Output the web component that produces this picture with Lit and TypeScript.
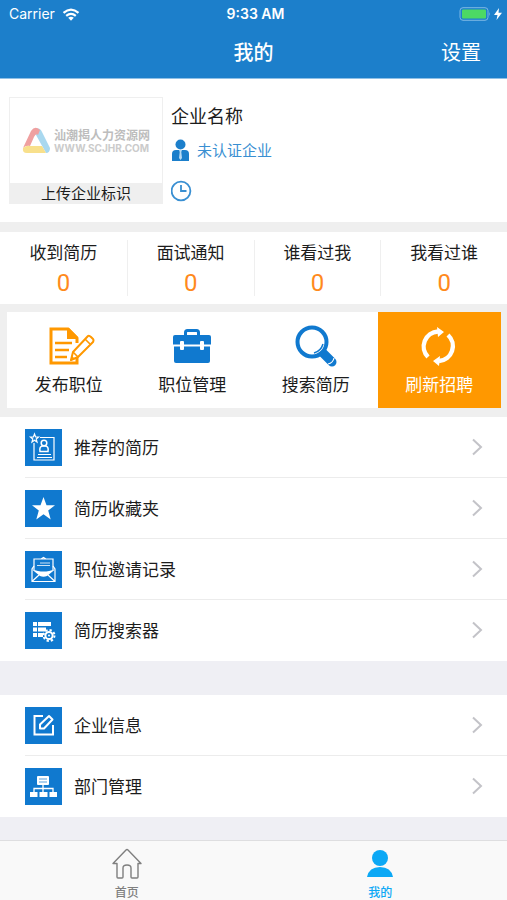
import { LitElement, html, css } from "lit";
import type { TemplateResult } from "lit";
import { customElement, state } from "lit/decorators.js";
import { classMap } from "lit/directives/class-map.js";

const icons: Record<string, TemplateResult> = {
  publish: html`<svg viewBox="-6 0 52 40" width="52" height="40" aria-hidden="true">
    <path d="M28 29V37H2V3H19L28 12V17" fill="none" stroke="#ff9800" stroke-width="3"/>
    <path d="M18 2H20L29 11V13H18Z" fill="#ff9800"/>
    <path d="M6 17H23M6 24H20M6 31H18" stroke="#ff9800" stroke-width="2.4" fill="none"/>
    <path d="M22 34L24 26L39 10Q40 9 42 11L44 13Q45 14 44 16L29 31Z" fill="#fff" stroke="#ff9800" stroke-width="2" stroke-linejoin="round"/>
    <path d="M36 13L41 18M24 26L29 31" stroke="#ff9800" stroke-width="1.6" fill="none"/>
    <path d="M21 35L23 30L26 33Z" fill="#ff9800"/>
  </svg>`,
  briefcase: html`<svg viewBox="0 0 40 40" width="40" height="40" aria-hidden="true">
    <path d="M13.500 10V6.500Q13.500 4.500 15.500 4.500H24.500Q26.500 4.500 26.500 6.500V10" fill="none" stroke="#1079cf" stroke-width="3"/>
    <path d="M3 9H37Q39 9 39 11V18.500H1V11Q1 9 3 9Z" fill="#1079cf"/>
    <path d="M2 20.500H38V35Q38 37 36 37H4Q2 37 2 35Z" fill="#1079cf"/>
    <rect x="8" y="15" width="4" height="9" rx="1" fill="#fff"/>
    <rect x="28" y="15" width="4" height="9" rx="1" fill="#fff"/>
  </svg>`,
  magnifier: html`<svg viewBox="0 0 42 42" width="42" height="42" aria-hidden="true">
    <path d="M28 28L37 37" stroke="#1079cf" stroke-width="9" stroke-linecap="round"/>
    <circle cx="17" cy="17" r="14.5" fill="#fff" stroke="#1079cf" stroke-width="4"/>
    <path d="M19 28Q26 26 28 19" fill="none" stroke="#1079cf" stroke-width="1.5"/>
    <path d="M33 39Q38 38 39 33" fill="none" stroke="#fff" stroke-width="1.2"/>
  </svg>`,
  refresh: html`<svg viewBox="0 0 38 40" width="38" height="40" aria-hidden="true">
    <path d="M8 31A15 15 0 0 1 18 5.500M28 9A15 15 0 0 1 19 35" fill="none" stroke="#fff" stroke-width="4.4"/>
    <path d="M17 1L24 6L18 11Z M20 30L13 35L19 40Z" fill="#fff"/>
  </svg>`,
  recommend: html`<svg viewBox="0 0 37 37" width="37" height="37" aria-hidden="true">
    <g fill="none" stroke="#fff" stroke-width="1.2">
      <path d="M15 8.500H29V31H9V14"/>
      <circle cx="19" cy="14" r="2.8" stroke-width="1.5"/>
      <path d="M15 22.500Q14 17 18 17H20Q24 17 23 22.500Z" stroke-width="1.5"/>
      <path d="M13 25.500H26M12 28.500H27"/>
      <path d="M9.500 5L10.600 8H13.500L11.200 10L12 13L9.500 11.200L7 13L7.800 10L5.500 8H8.400Z"/>
    </g>
  </svg>`,
  star: html`<svg viewBox="0 0 37 37" width="37" height="37" aria-hidden="true">
    <path d="M18.500 7L21.500 15.300H30L23.200 20.500L25.700 29.500L18.500 24.200L11.300 29.500L13.800 20.500L7 15.300H15.500Z" fill="#fff"/>
  </svg>`,
  envelope: html`<svg viewBox="0 0 37 37" width="37" height="37" aria-hidden="true">
    <g fill="none" stroke="#fff" stroke-width="1.2">
      <path d="M9 19V8H28V19M16 8L18.500 6.500L21 8"/>
      <path d="M9 15L7 18V30.500H30V18L28 15M7.500 30L14 24M29.500 30L23 24"/>
      <path d="M15 12H25M12 14.500H25" stroke-width=".8"/>
    </g>
    <path d="M7 18.500L13 20Q18.500 21 24 20L30 18.500L22 25Q18.500 26.500 15 25Z" fill="#fff"/>
  </svg>`,
  filter: html`<svg viewBox="0 0 37 37" width="37" height="37" aria-hidden="true">
    <path d="M8 10H12V14H8ZM13 10H26V14H13ZM8 15.500H12V19.500H8ZM13 15.500H21V19.500H13ZM8 21H12V25H8ZM13 21H18V25H13Z" fill="#fff"/>
    <circle cx="24" cy="23.5" r="5.5" fill="none" stroke="#fff" stroke-width="2" stroke-dasharray="2.3 2"/>
    <circle cx="24" cy="23.5" r="3.6" fill="#1079cf" stroke="#fff" stroke-width="2"/>
    <circle cx="24" cy="23.5" r="1" fill="#fff"/>
  </svg>`,
  edit: html`<svg viewBox="0 0 37 37" width="37" height="37" aria-hidden="true">
    <path d="M18 9H9.500V27.500H28V18" fill="none" stroke="#fff" stroke-width="2"/>
    <path d="M15 21.500V17.500L24 9L27.500 12.500L19 21.500Z" fill="none" stroke="#fff" stroke-width="2" stroke-linejoin="round"/>
  </svg>`,
  organisation: html`<svg viewBox="0 0 37 37" width="37" height="37" aria-hidden="true">
    <rect x="12" y="8" width="12" height="9" rx="1" fill="#fff"/>
    <path d="M14 11H22M14 14H22" stroke="#1079cf" stroke-width=".7"/>
    <path d="M18 17V24M9 24V20.500H28V24" fill="none" stroke="#fff" stroke-width="1.3"/>
    <path d="M5 24H12.500V29H5ZM14.500 24H22.500V29H14.500ZM24.500 24H32V29H24.500Z" fill="#fff"/>
  </svg>`,
  home: html`<svg viewBox="0 0 32 32" width="32" height="32" aria-hidden="true">
    <path d="M15 2Q16 1 17 2L30 15.500H27V29Q27 30 26 30H21Q20 30 20 29V20Q20 17 16 17T12 20V29Q12 30 11 30H7Q6 30 6 29V15.500H2Z" fill="none" stroke="#7f7f7f" stroke-width="1.4" stroke-linejoin="round"/>
  </svg>`,
  person: html`<svg viewBox="0 0 32 32" width="32" height="32" aria-hidden="true">
    <circle cx="16" cy="10" r="8" fill="#0ca8f5"/>
    <path d="M3 29Q5 19 16 19T29 29Z" fill="#0ca8f5"/>
  </svg>`,
};

const stats = [
  { label: "收到简历", value: 0 },
  { label: "面试通知", value: 0 },
  { label: "谁看过我", value: 0 },
  { label: "我看过谁", value: 0 },
];

const actions = [
  { label: "发布职位", icon: "publish", accent: false },
  { label: "职位管理", icon: "briefcase", accent: false },
  { label: "搜索简历", icon: "magnifier", accent: false },
  { label: "刷新招聘", icon: "refresh", accent: true },
];

const menus = [
  [
    { label: "推荐的简历", icon: "recommend" },
    { label: "简历收藏夹", icon: "star" },
    { label: "职位邀请记录", icon: "envelope" },
    { label: "简历搜索器", icon: "filter" },
  ],
  [
    { label: "企业信息", icon: "edit" },
    { label: "部门管理", icon: "organisation" },
  ],
];

const tabs = [
  { id: "home", label: "首页", icon: "home" },
  { id: "mine", label: "我的", icon: "person" },
];

@customElement("app-root")
export class AppRoot extends LitElement {
  @state() private tab = "mine";

  static styles = css`
    :host {
      display: flex;
      flex-direction: column;
      min-height: 100vh;
      background: #efeff4;
      color: #1c1c1c;
      font-family: "Noto Sans CJK SC", sans-serif;
      font-size: 17px;
      line-height: 24px;
    }
    * { box-sizing: border-box; }
    svg { display: block; flex: none; }
    button {
      margin: 0;
      padding: 0;
      border: 0;
      background: none;
      color: inherit;
      font: inherit;
      cursor: pointer;
    }
    a { color: inherit; text-decoration: none; }
    ul { list-style: none; margin: 0; padding: 0; }

    .top { background: #1c7fcb; color: #fff; border-bottom: 1px solid #8fc0e6; }
    .status, .nav {
      display: grid;
      grid-template-columns: 1fr auto 1fr;
      align-items: center;
    }
    .status {
      height: 28px;
      padding: 0 5px 0 9px;
      font-family: Inter, sans-serif;
      font-size: 14px;
      line-height: 20px;
    }
    .carrier { display: flex; align-items: center; gap: 7px; }
    .clock { font-weight: 600; }
    .power { display: flex; justify-content: flex-end; align-items: center; gap: 3px; }
    .nav { height: 48px; margin-bottom: 2px; padding: 0 26px; font-size: 20px; line-height: 28px; }
    .title { grid-column: 2; margin: 0; font-size: 20px; font-weight: 500; }
    .settings { justify-self: end; }

    .profile {
      display: flex;
      gap: 8px;
      padding: 18px 9px;
      background: #fff;
    }
    .upload {
      display: flex;
      flex-direction: column;
      width: 154px;
      height: 107px;
      border: 1px solid #efefef;
    }
    .brand {
      flex: 1;
      display: flex;
      align-items: center;
      justify-content: center;
      gap: 4px;
      width: 100%;
    }
    .brand-text { text-align: left; color: #bdbdbd; font-weight: 700; }
    .brand-name { display: block; font-size: 12px; line-height: 14px; }
    .brand-url { display: block; font-family: Inter, sans-serif; font-size: 10px; line-height: 12px; color: #cbcbcb; }
    .caption { width: 100%; background: #efefef; font-size: 15px; line-height: 20px; }
    .company { display: flex; flex-direction: column; align-items: flex-start; }
    .name { margin: 5px 0 10px; font-size: 18px; font-weight: 400; line-height: 26px; }
    .verify { display: flex; align-items: center; gap: 7px; color: #398fd2; font-size: 15px; }
    .time { margin-top: 18px; }

    .stats {
      display: grid;
      grid-template-columns: repeat(4, 1fr);
      padding: 8px 0;
      background: #fff;
      border-top: 10px solid #efefef;
    }
    .stat {
      display: flex;
      flex-direction: column;
      align-items: center;
      gap: 4px;
      width: 100%;
      height: 56px;
    }
    .stat-cell + .stat-cell { border-left: 1px solid #efefef; }
    .stat-value { color: #ff8a1c; font-family: Roboto, sans-serif; font-size: 24px; line-height: 30px; }

    .actions {
      display: grid;
      grid-template-columns: repeat(4, 1fr);
      padding: 8px 6px 9px 7px;
      background: #efefef;
    }
    .action {
      display: flex;
      flex-direction: column;
      align-items: center;
      gap: 4px;
      height: 96px;
      padding-top: 12px;
      background: #fff;
    }
    .action-icon { display: flex; align-items: center; height: 44px; }
    .accent { background: #ff9800; color: #fff; }

    .menu { background: #fff; margin-bottom: 34px; }
    .menu:last-child { margin-bottom: 0; }
    .item { padding-left: 25px; }
    .row {
      display: flex;
      align-items: center;
      gap: 12px;
      height: 61px;
      padding-right: 24px;
      border-bottom: 1px solid #ececec;
    }
    .item:last-child .row { border-color: transparent; }
    .tile { background: #1079cf; }
    .row-label { flex: 1; }

    .main { flex: 1; padding-bottom: 23px; }
    .tabs {
      display: grid;
      grid-template-columns: 1fr 1fr;
      background: #f9f9f9;
      border-top: 1px solid #dedee0;
    }
    .tab {
      display: flex;
      flex-direction: column;
      align-items: center;
      gap: 3px;
      padding-top: 7px;
      color: #7f7f7f;
      font-size: 12px;
      font-weight: 500;
      line-height: 17px;
    }
    .current { color: #0ca8f5; }
  `;

  private renderHeader() {
    return html`
      <header class="top">
        <div class="status">
          <span class="carrier">Carrier
            <svg viewBox="0 0 18 13" width="18" height="13" aria-hidden="true">
              <path d="M1.500 4.800Q9-1.600 16.500 4.800M4.200 7.800Q9 3.800 13.800 7.800" fill="none" stroke="#fff" stroke-width="2.2"/>
              <path d="M6.200 9.800Q9 7.800 11.800 9.800L9 12.800Z" fill="#fff"/>
            </svg>
          </span>
          <span class="clock">9:33 AM</span>
          <span class="power">
            <svg viewBox="0 0 32 14" width="32" height="14" aria-hidden="true">
              <rect x="1" y=".7" width="28" height="12.6" rx="3" fill="none" stroke="#7db8e4"/>
              <rect x="3" y="2.5" width="24" height="9" rx="1" fill="#4cd964"/>
              <path d="M30.300 5Q32 7 30.300 9Z" fill="#7db8e4"/>
            </svg>
            <svg viewBox="0 0 8 12" width="8" height="12" aria-hidden="true">
              <path d="M5 0L0 7H3.500L2.500 12L8 4.800H4.500Z" fill="#fff"/>
            </svg>
          </span>
        </div>
        <div class="nav">
          <h1 class="title">我的</h1>
          <button class="settings" type="button">设置</button>
        </div>
      </header>
    `;
  }

  private renderProfile() {
    return html`
      <section class="profile">
        <button class="upload" type="button">
          <span class="brand">
            <svg viewBox="0 0 28 27" width="28" height="27" aria-hidden="true">
              <path d="M14 2Q18 0 20 5L28 21Q28 26 24 26Q19 17 14 8Z" fill="#a9d8ef"/>
              <path d="M9 4Q13-2 18 3L16 8Q14 6 12 10L8 19Q4 18 1 21Z" fill="#efa0a0"/>
              <path d="M1 21Q5 18 8 19H20L24 26H5Q0 26 1 21Z" fill="#f8e08c"/>
            </svg>
            <span class="brand-text">
              <span class="brand-name">汕潮揭人力资源网</span>
              <span class="brand-url">WWW.SCJHR.COM</span>
            </span>
          </span>
          <span class="caption">上传企业标识</span>
        </button>
        <div class="company">
          <h2 class="name">企业名称</h2>
          <a class="verify" href="#verify">
            <svg viewBox="0 0 19 22" width="19" height="22" aria-hidden="true">
              <circle cx="9.5" cy="5.5" r="5" fill="#1c7fcb"/>
              <path d="M1 22V15Q1 11 5 11H14Q18 11 18 15V22Z" fill="#1c7fcb"/>
              <path d="M8 11H11L10.300 13L11 19L9.500 21L8 19L8.700 13Z" fill="#b9daf2"/>
            </svg>
            未认证企业
          </a>
          <svg class="time" viewBox="0 0 22 22" width="22" height="22" aria-hidden="true">
            <circle cx="10" cy="11" r="9.4" fill="none" stroke="#398fd2" stroke-width="1.8"/>
            <path d="M10 5V11H15.500" fill="none" stroke="#398fd2" stroke-width="1.8"/>
          </svg>
        </div>
      </section>
    `;
  }

  render() {
    return html`
      ${this.renderHeader()}
      <main class="main">
        ${this.renderProfile()}
        <ul class="stats">
          ${stats.map((s) => html`
            <li class="stat-cell">
              <button class="stat" type="button">
                <span>${s.label}</span>
                <span class="stat-value">${s.value}</span>
              </button>
            </li>`)}
        </ul>
        <div class="actions">
          ${actions.map((a) => html`
            <button type="button" class=${classMap({ action: true, accent: a.accent })}>
              <span class="action-icon">${icons[a.icon]}</span>
              <span>${a.label}</span>
            </button>`)}
        </div>
        ${menus.map((menu) => html`
          <ul class="menu">
            ${menu.map((m) => html`
              <li class="item">
                <a class="row" href="#${m.icon}">
                  <span class="tile">${icons[m.icon]}</span>
                  <span class="row-label">${m.label}</span>
                  <svg viewBox="0 0 12 18" width="12" height="18" aria-hidden="true">
                    <path d="M2 1.500L10 9L2 16.500" fill="none" stroke="#c3c3c8" stroke-width="2"/>
                  </svg>
                </a>
              </li>`)}
          </ul>`)}
      </main>
      <nav class="tabs">
        ${tabs.map((t) => html`
          <button
            type="button"
            class=${classMap({ tab: true, current: t.id === this.tab })}
            @click=${() => { this.tab = t.id; }}
          >
            ${icons[t.icon]}
            <span>${t.label}</span>
          </button>`)}
      </nav>
    `;
  }
}
